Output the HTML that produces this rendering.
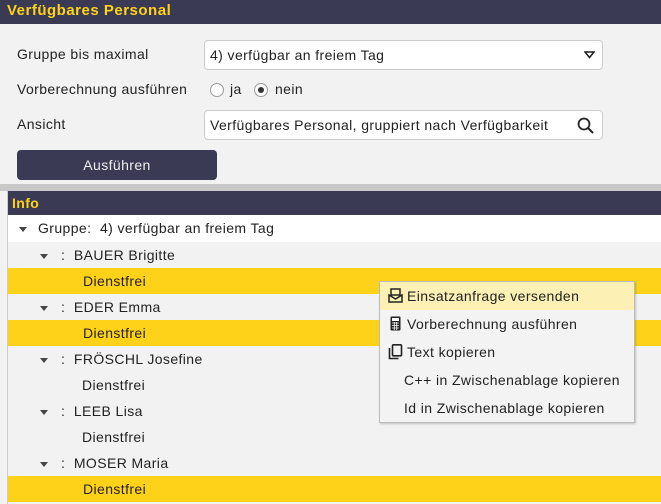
<!DOCTYPE html>
<html><head><meta charset="utf-8"><style>
*{box-sizing:border-box;margin:0;padding:0}
body{width:661px;height:504px;overflow:hidden;background:#f2f2f2;font-family:"Liberation Sans",sans-serif;font-size:14px;letter-spacing:0.4px;color:#222;position:relative;white-space:nowrap}
.hdr{position:absolute;left:0;top:0;width:661px;height:24px;background:#3b3a55;color:#ffd21a;font-weight:bold;font-size:15px;letter-spacing:0.5px;padding:2px 0 0 7px}
.lbl{position:absolute;left:17px}
.inp{position:absolute;left:204px;width:399px;height:30px;background:#fff;border:1px solid #ccc;border-radius:4px;padding:6px 0 0 5px}
.btn{position:absolute;left:17px;top:150px;width:200px;height:30px;background:#3b3a55;border-radius:4px;color:#eee;text-align:center;padding-top:7px}
.bar{position:absolute;left:0;top:184px;width:661px;height:7px;background:#c8c8c8}
.panel{position:absolute;left:7px;top:191px;width:654px;height:313px;border-left:1px solid #ccc}
.info{height:24px;background:#3b3a55;color:#ffd21a;font-weight:bold;padding:4px 0 0 4px}
.row{height:26px;padding-top:5px;position:relative}
.tri{display:inline-block;width:0;height:0;border-left:4px solid transparent;border-right:4px solid transparent;border-top:5px solid #444;vertical-align:middle;margin-right:13px}
.y{background:#ffd21a}
.menu{position:absolute;left:379px;top:281px;width:256px;height:142px;background:#f3f3f3;border:1px solid #bbb;box-shadow:1px 1px 2px rgba(0,0,0,.2)}
.mi{height:28px;padding:6px 0 0 27px;position:relative}
.mi svg{position:absolute;left:8px;top:6px}
</style></head><body>
<div class="hdr">Verfügbares Personal</div>
<div class="lbl" style="top:46px">Gruppe bis maximal</div>
<div class="inp" style="top:40px">4) verfügbar an freiem Tag
<svg style="position:absolute;right:7px;top:10px" width="11" height="8"><path d="M1 1H10L5.5 6.5Z" fill="none" stroke="#222" stroke-width="1.6"/></svg></div>
<div class="lbl" style="top:81px">Vorberechnung ausführen</div>
<div style="position:absolute;left:210px;top:83px;width:14px;height:14px;border:1px solid #999;border-radius:50%;background:#fff"></div>
<div style="position:absolute;left:230px;top:81px">ja</div>
<div style="position:absolute;left:254px;top:83px;width:14px;height:14px;border:1px solid #999;border-radius:50%;background:#fff"><div style="width:6px;height:6px;background:#333;border-radius:50%;margin:3px"></div></div>
<div style="position:absolute;left:275px;top:81px">nein</div>
<div class="lbl" style="top:116px">Ansicht</div>
<div class="inp" style="top:110px">Verfügbares Personal, gruppiert nach Verfügbarkeit
<svg style="position:absolute;right:8px;top:6px" width="17" height="17"><circle cx="7" cy="7" r="5.5" fill="none" stroke="#222" stroke-width="1.8"/><path d="M11 11L16 16" stroke="#222" stroke-width="2"/></svg></div>
<div class="btn">Ausführen</div>
<div class="bar"></div>
<div class="panel">
<div class="info">Info</div>
<div class="row" style="background:#fff;height:27px;padding-left:11px"><span class="tri" style="margin-right:11px"></span>Gruppe:&nbsp; 4) verfügbar an freiem Tag</div>
<div class="row" style="padding-left:32px"><span class="tri"></span>:&nbsp; BAUER Brigitte</div>
<div class="row y" style="padding-left:75px">Dienstfrei</div>
<div class="row" style="padding-left:32px"><span class="tri"></span>:&nbsp; EDER Emma</div>
<div class="row y" style="padding-left:75px">Dienstfrei</div>
<div class="row" style="padding-left:32px"><span class="tri"></span>:&nbsp; FRÖSCHL Josefine</div>
<div class="row" style="padding-left:74px">Dienstfrei</div>
<div class="row" style="padding-left:32px"><span class="tri"></span>:&nbsp; LEEB Lisa</div>
<div class="row" style="padding-left:74px">Dienstfrei</div>
<div class="row" style="padding-left:32px"><span class="tri"></span>:&nbsp; MOSER Maria</div>
<div class="row y" style="padding-left:75px">Dienstfrei</div>
</div>
<div class="menu">
<div class="mi" style="background:#fdf0b5"><svg width="15" height="15"><rect x="3" y="1" width="9" height="6" fill="none" stroke="#222" stroke-width="1.5"/><path d="M1 7V14H14V7L7.5 11Z" fill="none" stroke="#222" stroke-width="1.5"/></svg>Einsatzanfrage versenden</div>
<div class="mi"><svg width="15" height="15"><rect x="2.5" y="0.5" width="10" height="14" rx="1" fill="#222"/><rect x="4" y="2" width="7" height="3" fill="#fff"/><path d="M4 7h7M4 9.5h7M4 12h7M6.3 6v8M8.7 6v8" stroke="#fff" stroke-width=".8"/></svg>Vorberechnung ausführen</div>
<div class="mi"><svg width="15" height="16"><rect x="4.5" y="0.8" width="9" height="11" rx="1" fill="none" stroke="#222" stroke-width="1.6"/><path d="M1.5 4V14.5H10.5" fill="none" stroke="#222" stroke-width="1.6"/></svg>Text kopieren</div>
<div class="mi" style="padding-left:24px">C++ in Zwischenablage kopieren</div>
<div class="mi" style="padding-left:24px">Id in Zwischenablage kopieren</div>
</div>
</body></html>
